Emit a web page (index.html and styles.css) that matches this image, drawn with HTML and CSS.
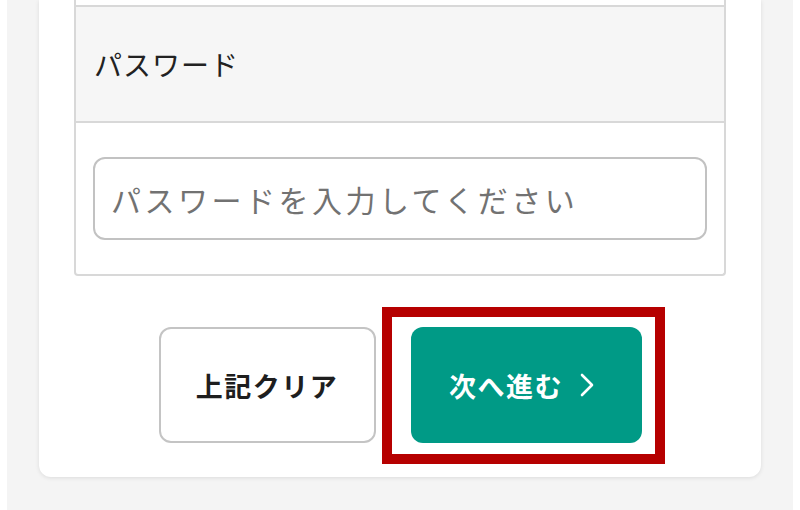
FILE: index.html
```html
<!DOCTYPE html>
<html lang="ja">
<head>
<meta charset="utf-8">
<link rel="stylesheet" href="styles.css">
</head>
<body>
<div class="page">
  <div class="card">
    <div class="table">
      <div class="row row-prev"></div>
      <div class="row row-head">パスワード</div>
      <div class="row row-input">
        <input class="field" type="password" placeholder="パスワードを入力してください">
      </div>
    </div>
    <div class="actions">
      <button class="btn btn-clear" type="button">上記クリア</button>
      <div class="next-wrap">
        <button class="btn btn-next" type="button">次へ進む<svg class="chev" width="16" height="24" viewBox="0 0 16 24"><polyline points="3,2 13,12 3,22" fill="none" stroke="#fff" stroke-width="2.6" stroke-linecap="round" stroke-linejoin="round"/></svg></button>
        <div class="highlight"></div>
      </div>
    </div>
  </div>
</div>
</body>
</html>
```

FILE: styles.css
```css
html, body {
  margin: 0;
  padding: 0;
  background: #ffffff;
  height: 510px;
  overflow: hidden;
}
body {
  font-family: "Noto Sans CJK JP", "Noto Sans", sans-serif;
}
.page {
  margin: 0 7px;
  background: #f4f4f4;
  padding: 0 32px 33px 32px;
  height: 510px;
  box-sizing: border-box;
}
.card {
  background: #ffffff;
  border-radius: 0 0 12px 12px;
  box-shadow: 0 1px 4px rgba(0,0,0,0.10);
  padding: 0 35px 34px 35px;
}
.table {
  border-left: 2px solid #d8d8d8;
  border-right: 2px solid #d8d8d8;
  border-bottom: 2px solid #d8d8d8;
  border-radius: 0 0 4px 4px;
}
.row-prev {
  height: 5px;
  border-bottom: 2px solid #d8d8d8;
}
.row-head {
  background: #f6f6f6;
  height: 116px;
  box-sizing: border-box;
  border-bottom: 2px solid #d8d8d8;
  display: flex;
  align-items: center;
  padding-left: 18px;
  font-size: 28px;
  letter-spacing: 1px;
  color: #222;
}
.row-input {
  padding: 34px 17px 34px 17px;
}
.field {
  display: block;
  width: 100%;
  height: 83px;
  box-sizing: border-box;
  border: 2px solid #c2c2c2;
  border-radius: 12px;
  padding: 0 16px;
  font-family: "Noto Sans CJK JP", "Noto Sans", sans-serif;
  font-size: 30px;
  letter-spacing: 3.5px;
  background: #fff;
  outline: none;
}
.field::placeholder {
  color: #727272;
}
.actions {
  display: flex;
  justify-content: center;
  gap: 35px;
  margin-top: 51px;
}
.btn {
  height: 116px;
  border-radius: 12px;
  font-family: "Noto Sans CJK JP", "Noto Sans", sans-serif;
  font-weight: 700;
  font-size: 27px;
  letter-spacing: 1.5px;
  display: flex;
  align-items: center;
  justify-content: center;
  padding: 0;
  cursor: pointer;
  flex: none;
}
.btn-clear {
  width: 217px;
  background: #fff;
  border: 2px solid #c4c4c4;
  color: #1e1e1e;
}
.next-wrap {
  position: relative;
  flex: none;
}
.btn-next {
  width: 231px;
  background: #009a86;
  border: none;
  color: #fff;
  padding-right: 8px;
}
.chev {
  margin-left: 16px;
}
.highlight {
  position: absolute;
  left: -29px;
  right: -23px;
  top: -20px;
  bottom: -21px;
  border: 10px solid #b60000;
  pointer-events: none;
}
```
